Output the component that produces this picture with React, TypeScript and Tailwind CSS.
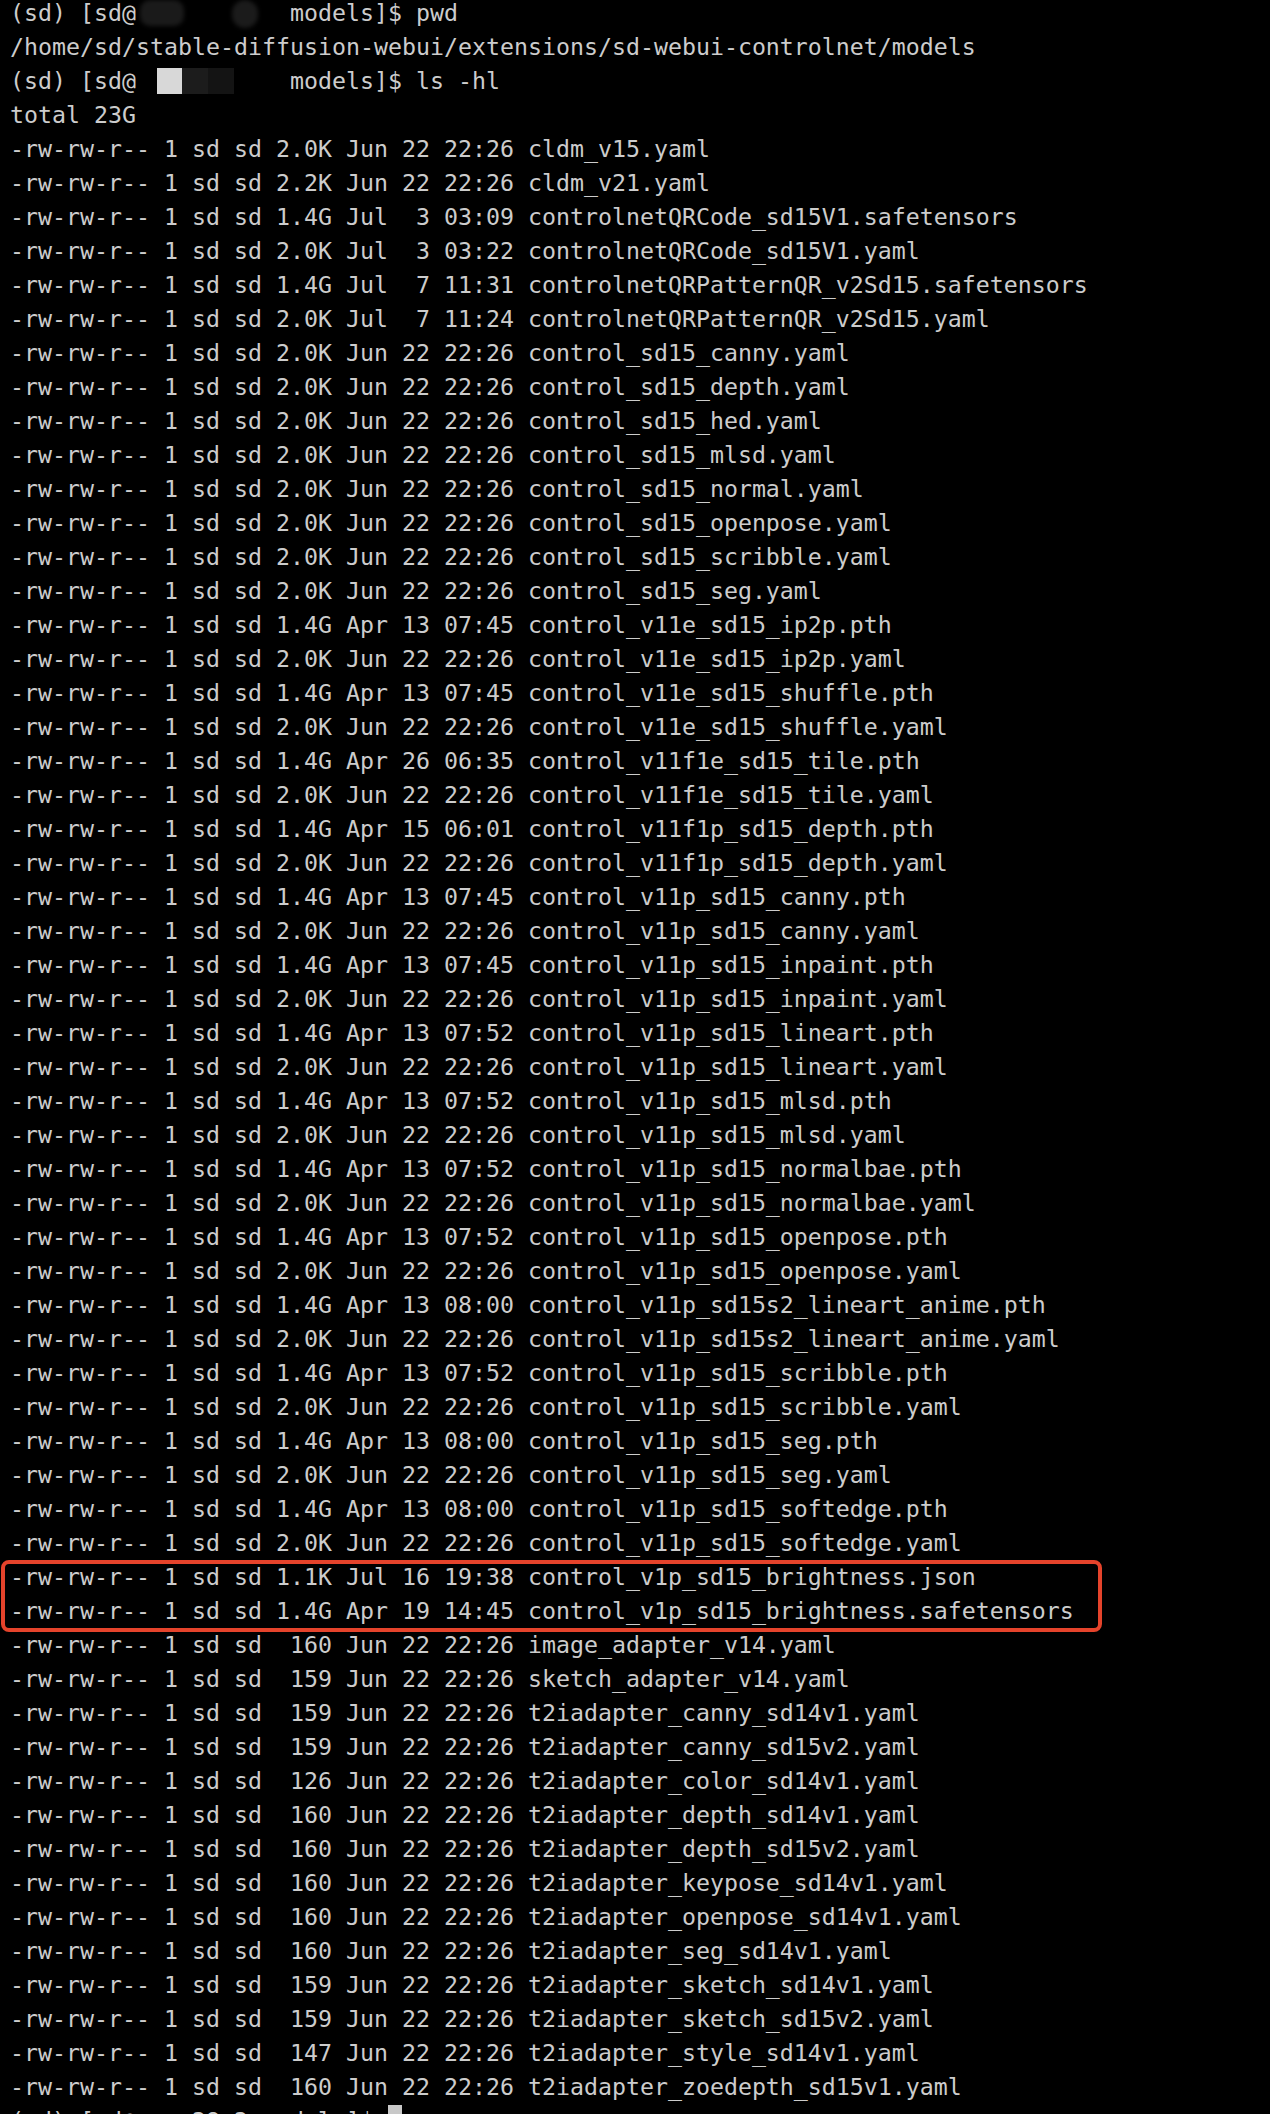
type Row = [string, string, string];

const ROWS: Row[] = [
  ["2.0K", "Jun 22 22:26", "cldm_v15.yaml"],
  ["2.2K", "Jun 22 22:26", "cldm_v21.yaml"],
  ["1.4G", "Jul  3 03:09", "controlnetQRCode_sd15V1.safetensors"],
  ["2.0K", "Jul  3 03:22", "controlnetQRCode_sd15V1.yaml"],
  ["1.4G", "Jul  7 11:31", "controlnetQRPatternQR_v2Sd15.safetensors"],
  ["2.0K", "Jul  7 11:24", "controlnetQRPatternQR_v2Sd15.yaml"],
  ["2.0K", "Jun 22 22:26", "control_sd15_canny.yaml"],
  ["2.0K", "Jun 22 22:26", "control_sd15_depth.yaml"],
  ["2.0K", "Jun 22 22:26", "control_sd15_hed.yaml"],
  ["2.0K", "Jun 22 22:26", "control_sd15_mlsd.yaml"],
  ["2.0K", "Jun 22 22:26", "control_sd15_normal.yaml"],
  ["2.0K", "Jun 22 22:26", "control_sd15_openpose.yaml"],
  ["2.0K", "Jun 22 22:26", "control_sd15_scribble.yaml"],
  ["2.0K", "Jun 22 22:26", "control_sd15_seg.yaml"],
  ["1.4G", "Apr 13 07:45", "control_v11e_sd15_ip2p.pth"],
  ["2.0K", "Jun 22 22:26", "control_v11e_sd15_ip2p.yaml"],
  ["1.4G", "Apr 13 07:45", "control_v11e_sd15_shuffle.pth"],
  ["2.0K", "Jun 22 22:26", "control_v11e_sd15_shuffle.yaml"],
  ["1.4G", "Apr 26 06:35", "control_v11f1e_sd15_tile.pth"],
  ["2.0K", "Jun 22 22:26", "control_v11f1e_sd15_tile.yaml"],
  ["1.4G", "Apr 15 06:01", "control_v11f1p_sd15_depth.pth"],
  ["2.0K", "Jun 22 22:26", "control_v11f1p_sd15_depth.yaml"],
  ["1.4G", "Apr 13 07:45", "control_v11p_sd15_canny.pth"],
  ["2.0K", "Jun 22 22:26", "control_v11p_sd15_canny.yaml"],
  ["1.4G", "Apr 13 07:45", "control_v11p_sd15_inpaint.pth"],
  ["2.0K", "Jun 22 22:26", "control_v11p_sd15_inpaint.yaml"],
  ["1.4G", "Apr 13 07:52", "control_v11p_sd15_lineart.pth"],
  ["2.0K", "Jun 22 22:26", "control_v11p_sd15_lineart.yaml"],
  ["1.4G", "Apr 13 07:52", "control_v11p_sd15_mlsd.pth"],
  ["2.0K", "Jun 22 22:26", "control_v11p_sd15_mlsd.yaml"],
  ["1.4G", "Apr 13 07:52", "control_v11p_sd15_normalbae.pth"],
  ["2.0K", "Jun 22 22:26", "control_v11p_sd15_normalbae.yaml"],
  ["1.4G", "Apr 13 07:52", "control_v11p_sd15_openpose.pth"],
  ["2.0K", "Jun 22 22:26", "control_v11p_sd15_openpose.yaml"],
  ["1.4G", "Apr 13 08:00", "control_v11p_sd15s2_lineart_anime.pth"],
  ["2.0K", "Jun 22 22:26", "control_v11p_sd15s2_lineart_anime.yaml"],
  ["1.4G", "Apr 13 07:52", "control_v11p_sd15_scribble.pth"],
  ["2.0K", "Jun 22 22:26", "control_v11p_sd15_scribble.yaml"],
  ["1.4G", "Apr 13 08:00", "control_v11p_sd15_seg.pth"],
  ["2.0K", "Jun 22 22:26", "control_v11p_sd15_seg.yaml"],
  ["1.4G", "Apr 13 08:00", "control_v11p_sd15_softedge.pth"],
  ["2.0K", "Jun 22 22:26", "control_v11p_sd15_softedge.yaml"],
];

const MARKED: Row[] = [
  ["1.1K", "Jul 16 19:38", "control_v1p_sd15_brightness.json"],
  ["1.4G", "Apr 19 14:45", "control_v1p_sd15_brightness.safetensors"],
];

const ADAPTERS: Row[] = [
  [" 160", "Jun 22 22:26", "image_adapter_v14.yaml"],
  [" 159", "Jun 22 22:26", "sketch_adapter_v14.yaml"],
  [" 159", "Jun 22 22:26", "t2iadapter_canny_sd14v1.yaml"],
  [" 159", "Jun 22 22:26", "t2iadapter_canny_sd15v2.yaml"],
  [" 126", "Jun 22 22:26", "t2iadapter_color_sd14v1.yaml"],
  [" 160", "Jun 22 22:26", "t2iadapter_depth_sd14v1.yaml"],
  [" 160", "Jun 22 22:26", "t2iadapter_depth_sd15v2.yaml"],
  [" 160", "Jun 22 22:26", "t2iadapter_keypose_sd14v1.yaml"],
  [" 160", "Jun 22 22:26", "t2iadapter_openpose_sd14v1.yaml"],
  [" 160", "Jun 22 22:26", "t2iadapter_seg_sd14v1.yaml"],
  [" 159", "Jun 22 22:26", "t2iadapter_sketch_sd14v1.yaml"],
  [" 159", "Jun 22 22:26", "t2iadapter_sketch_sd15v2.yaml"],
  [" 147", "Jun 22 22:26", "t2iadapter_style_sd14v1.yaml"],
  [" 160", "Jun 22 22:26", "t2iadapter_zoedepth_sd15v1.yaml"],
];

function Line({ children }: { children: React.ReactNode }) {
  return <div className="h-[34px] whitespace-pre">{children}</div>;
}

function FileLine({ row }: { row: Row }) {
  const [size, date, name] = row;
  return <Line>{`-rw-rw-r-- 1 sd sd ${size} ${date} ${name}`}</Line>;
}

// redacted hostname, smudged out in the screenshot
function HostBlur({ variant }: { variant: "smudge" | "blocks" | "faint" }) {
  if (variant === "smudge") {
    return (
      <span className="inline-flex w-[140px] h-[34px] align-top items-start pt-[4px] pl-[4px]">
        <span className="w-[44px] h-[26px] rounded-[10px] bg-[#1a1a1a] blur-[2px]" />
        <span className="w-[48px]" />
        <span className="w-[26px] h-[28px] rounded-full bg-[#1b1b1b] blur-[2px]" />
      </span>
    );
  }
  if (variant === "blocks") {
    return (
      <span className="inline-flex w-[140px] h-[34px] align-top items-start pt-[4px] pl-[21px]">
        <span className="w-[25px] h-[26px] bg-[#d8d8d8]" />
        <span className="w-[26px] h-[26px] bg-[#1c1c1c]" />
        <span className="w-[26px] h-[26px] bg-[#141414]" />
      </span>
    );
  }
  return <span className="inline-block w-[126px] h-[34px] align-top whitespace-pre">{"    28 2 "}</span>;
}

export default function App() {
  return (
    <div
      className="h-[2114px] overflow-hidden bg-black pl-[10px] text-[#cccccc] text-[23.25px] leading-[34px]"
      style={{ fontFamily: '"DejaVu Sans Mono", "Liberation Mono", monospace' }}
    >
      <div className="flex flex-col mt-[-4.5px]">
        <Line>
          {"(sd) [sd@"}
          <HostBlur variant="smudge" />
          {" models]$ pwd"}
        </Line>
        <Line>/home/sd/stable-diffusion-webui/extensions/sd-webui-controlnet/models</Line>
        <Line>
          {"(sd) [sd@"}
          <HostBlur variant="blocks" />
          {" models]$ ls -hl"}
        </Line>
        <Line>total 23G</Line>

        {ROWS.map((r) => (
          <FileLine key={r[2]} row={r} />
        ))}

        {/* highlighted pair, red annotation box drawn over it */}
        <div className="relative flex flex-col">
          {MARKED.map((r) => (
            <FileLine key={r[2]} row={r} />
          ))}
          <div className="absolute left-[-9px] top-0 w-[1101px] h-[72px] rounded-[8px] border-[4px] border-[#e5432b] pointer-events-none" />
        </div>

        {ADAPTERS.map((r) => (
          <FileLine key={r[2]} row={r} />
        ))}

        <Line>
          {"(sd) [sd@"}
          <HostBlur variant="faint" />
          {"models]$ "}
          <span className="inline-block w-[14px] h-[27px] mt-[1px] align-top bg-[#c8c8c8]" />
        </Line>
      </div>
    </div>
  );
}
